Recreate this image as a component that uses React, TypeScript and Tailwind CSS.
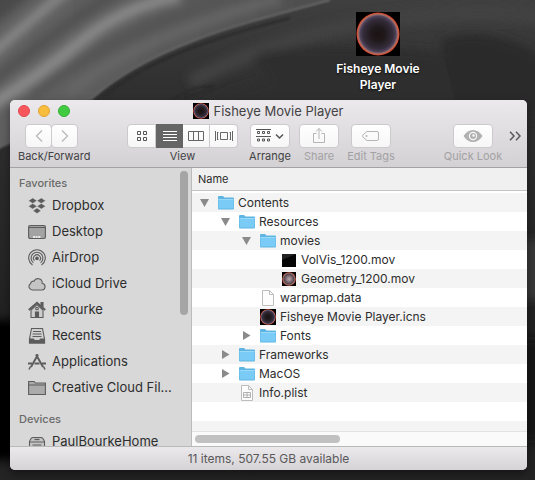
import type { ReactNode } from "react";

function OrbIcon({ id, className, light = false }: { id: string; className: string; light?: boolean }) {
  return (
    <svg viewBox="0 0 44 44" className={className} aria-hidden="true">
      <defs>
        <radialGradient id={id}>
          <stop offset="0" stopColor={light ? "#b9a7ab" : "#1b1213"} />
          <stop offset="0.35" stopColor={light ? "#8c7a82" : "#211a1d"} />
          <stop offset="0.7" stopColor={light ? "#58464f" : "#352d3b"} />
          <stop offset="0.84" stopColor={light ? "#8d6661" : "#51455f"} />
          <stop offset="0.9" stopColor="#946a6a" />
          <stop offset="0.94" stopColor="#c0654c" />
          <stop offset="1" stopColor="#dc3a26" />
        </radialGradient>
      </defs>
      <rect width="44" height="44" fill="#000" />
      <circle cx="22" cy="22" r="21.5" fill={`url(#${id})`} />
    </svg>
  );
}

function Wallpaper() {
  return (
    <svg
      className="absolute inset-0 h-full w-full"
      viewBox="0 0 535 480"
      preserveAspectRatio="none"
      aria-hidden="true"
    >
      <defs>
        <linearGradient id="desk" x1="0" y1="0" x2="0" y2="1">
          <stop offset="0" stopColor="#3f3f3f" />
          <stop offset="0.18" stopColor="#303030" />
          <stop offset="0.6" stopColor="#242424" />
          <stop offset="0.8" stopColor="#1c1c1c" />
          <stop offset="1" stopColor="#242424" />
        </linearGradient>
        <linearGradient id="sweep" x1="0" y1="0" x2="1" y2="0">
          <stop offset="0" stopColor="#646464" />
          <stop offset="0.6" stopColor="#575757" />
          <stop offset="1" stopColor="#484848" />
        </linearGradient>
        <filter id="soft" filterUnits="userSpaceOnUse" x="-60" y="-60" width="655" height="600">
          <feGaussianBlur stdDeviation="5" />
        </filter>
        <filter id="fine" filterUnits="userSpaceOnUse" x="-60" y="-60" width="655" height="600">
          <feGaussianBlur stdDeviation="1" />
        </filter>
      </defs>
      <rect width="535" height="480" fill="url(#desk)" />
      <g filter="url(#soft)" fill="none">
        <path d="M190 82Q290 30 400 18T560 22" stroke="#434343" strokeWidth="14" />
        <path d="M250 56Q300 40 420 50L580 70V120H180Q220 90 270 80" fill="#2e2e2e" />
        <path d="M195 78Q230 66 262 50" stroke="#424242" strokeWidth="6" />
        <path d="M440 40Q500 20 560 70V120H460Z" fill="#2b2b2b" />
      </g>
      <path
        d="M-60 -40H400L330 0C240 24 150 46 90 100L40 130Q14 142 -20 158Z"
        fill="url(#sweep)"
        filter="url(#fine)"
      />
      <g filter="url(#soft)" fill="none">
        <path d="M-20 20L30 -20" stroke="#484848" strokeWidth="26" />
        <path d="M-20 64Q40 12 80 -20" stroke="#8c8c8c" strokeWidth="9" />
        <path d="M-20 92Q60 26 120 -10" stroke="#505050" strokeWidth="9" />
        <path d="M-20 112Q36 78 80 42T180 -4" stroke="#8a8a8a" strokeWidth="12" />
        <path d="M30 96Q100 40 220 2" stroke="#545454" strokeWidth="12" />
        <path d="M70 92Q130 40 280 -2" stroke="#686868" strokeWidth="9" />
      </g>
      <g filter="url(#fine)" fill="none">
        <path d="M90 100C150 46 240 24 330 0" stroke="#737373" strokeWidth="1.500" />
        <path d="M104 96C150 58 220 36 290 18" stroke="#292929" strokeWidth="2" />
        <path d="M172 100Q190 87 212 86Q200 94 184 98" stroke="#282828" strokeWidth="1.500" />
      </g>
      <g filter="url(#soft)">
        <path d="M-30 320H20V460H-30Z" fill="#050505" />
        <path d="M520 240H560V300H520Z" fill="#393939" />
        <path d="M520 340H560V440H520Z" fill="#161616" />
      </g>
    </svg>
  );
}

function Tool({
  label,
  className,
  dim = false,
  children,
}: {
  label: string;
  className: string;
  dim?: boolean;
  children: ReactNode;
}) {
  return (
    <div role="group" aria-label={label} className={`flex shrink-0 flex-col items-center ${className}`}>
      <div className="flex h-6">{children}</div>
      <span
        className={`text-[11px] leading-4 whitespace-nowrap ${dim ? "text-[#a3a1a4]" : "text-[#434244]"}`}
      >
        {label}
      </span>
    </div>
  );
}

const buttonFace =
  "flex h-6 items-center justify-center border border-[#cccacd] bg-linear-to-b from-white to-[#f6f6f6] ";

function ViewIcon({ kind }: { kind: string }) {
  return (
    <svg width="20" height="12" viewBox="0 0 20 12" fill="none" stroke="currentColor" aria-hidden="true">
      {kind === "Icons" && (
        <path d="M5.5 1.5h3v3h-3zM11.500 1.5h3v3h-3zM5.5 7.500h3v3h-3zM11.500 7.500h3v3h-3z" />
      )}
      {kind === "List" && <path d="M3 1.5h14M3 4.500h14M3 7.500h14M3 10.500h14" />}
      {kind === "Columns" && <path d="M2.500 1.500h15v9h-15zM7.500 1.500v9M12.500 1.500v9" />}
      {kind === "Gallery" && (
        <path d="M6.500 2.500h7v7h-7zM1.500 1v10M3.500 2v8M18.500 1v10M16.500 2v8M3.500 2.500h1M3.500 9.500h1M15.500 2.500h1M15.500 9.500h1" />
      )}
    </svg>
  );
}

function Toolbar() {
  return (
    <div className="flex h-[45px] pt-[2px] pl-2 pr-[6px]">
      <div role="group" aria-label="Back/Forward" className="flex w-[74px] shrink-0 flex-col">
        <div className="ml-[7px] flex">
          <button aria-label="Back" className={buttonFace + "w-[27px] rounded-[4px] text-[#b9b9b9]"}>
            <svg width="8" height="14" viewBox="0 0 8 14" fill="none" stroke="currentColor" strokeWidth="1.300">
              <path d="M7 1.500L1.500 7L7 12.500" />
            </svg>
          </button>
          <button aria-label="Forward" className={buttonFace + "-ml-px w-[27px] rounded-[4px] text-[#b9b9b9]"}>
            <svg width="8" height="14" viewBox="0 0 8 14" fill="none" stroke="currentColor" strokeWidth="1.300">
              <path d="M1 1.500L6.500 7L1 12.500" />
            </svg>
          </button>
        </div>
        <span className="text-[11px] leading-4 whitespace-nowrap text-[#434244]">Back/Forward</span>
      </div>

      <Tool label="View" className="ml-[35px] w-[111px]">
        <button aria-label="Icons" className={buttonFace + "w-[29px] rounded-l-[4px] text-[#555]"}>
          <ViewIcon kind="Icons" />
        </button>
        <button
          aria-label="List"
          aria-pressed="true"
          className="flex h-6 w-[27px] items-center justify-center bg-[#666566] text-white"
        >
          <ViewIcon kind="List" />
        </button>
        <button aria-label="Columns" className={buttonFace + "w-[27px] border-l-0 text-[#666]"}>
          <ViewIcon kind="Columns" />
        </button>
        <button aria-label="Gallery" className={buttonFace + "w-[28px] rounded-r-[4px] border-l-0 text-[#666]"}>
          <ViewIcon kind="Gallery" />
        </button>
      </Tool>

      <Tool label="Arrange" className="ml-[11px] w-[42px]">
        <button aria-label="Arrange" className={buttonFace + "w-10 rounded-[4px] text-[#555]"}>
          <svg width="28" height="14" viewBox="0 0 28 14" fill="none" stroke="currentColor">
            <path d="M0 .5h15M0 7.500h15M1.500 2.500h2v2h-2zM6.500 2.500h2v2h-2zM11.500 2.500h2v2h-2zM1.500 10h2v2h-2zM6.500 10h2v2h-2zM11.500 10h2v2h-2z" />
            <path d="M20 5.500l3.500 3.500L27 5.500" strokeWidth="1.500" />
          </svg>
        </button>
      </Tool>

      <Tool label="Share" dim className="ml-2 w-10">
        <button aria-label="Share" className={buttonFace + "w-10 rounded-[4px] text-[#b5b5b5]"}>
          <svg width="14" height="18" viewBox="0 0 14 18" fill="none" stroke="currentColor">
            <path d="M4.500 6.500h-3v9h11v-9h-3M7 12V1.500M4 4.500l3-3l3 3" />
          </svg>
        </button>
      </Tool>

      <Tool label="Edit Tags" dim className="ml-2 w-12">
        <button aria-label="Edit Tags" className={buttonFace + "w-10 rounded-[4px] text-[#b5b5b5]"}>
          <svg width="18" height="12" viewBox="0 0 18 12" fill="none" stroke="currentColor">
            <path d="M5 1.500h10q1.500 0 1.500 1.500v6q0 1.500-1.500 1.500H5L1 7.200q-.8-1.200 0-2.400z" />
            <circle cx="4.500" cy="6" r="1" fill="currentColor" stroke="none" />
          </svg>
        </button>
      </Tool>

      <Tool label="Quick Look" dim className="ml-auto w-[58px]">
        <button aria-label="Quick Look" className={buttonFace + "w-10 rounded-[4px] text-[#b0b0b0]"}>
          <svg width="20" height="14" viewBox="0 0 20 14">
            <path d="M.5 7Q4.500 1 10 1T19.500 7Q15.500 13 10 13T.5 7z" fill="currentColor" />
            <circle cx="10" cy="7" r="4.200" fill="#f9f9f9" />
            <circle cx="10" cy="7" r="3" fill="currentColor" />
            <circle cx="10.500" cy="6.500" r="1.200" fill="#f9f9f9" />
          </svg>
        </button>
      </Tool>

      <button aria-label="More tools" className="ml-[7px] flex h-6 w-3 items-center text-[#59585a]">
        <svg width="12" height="10" viewBox="0 0 12 10" fill="none" stroke="currentColor" strokeWidth="1.500">
          <path d="M1 .8L5 5L1 9.200M7 .8L11 5L7 9.200" />
        </svg>
      </button>
    </div>
  );
}

const sidebarIcons: Record<string, ReactNode> = {
  Dropbox: (
    <path
      d="M4.700 1L9 3.700L4.700 6.400L.5 3.700zM13.300 1l4.200 2.700l-4.200 2.700L9 3.700zM4.700 6.600L9 9.300L4.700 12L.5 9.300zM13.300 6.600l4.200 2.700l-4.200 2.700L9 9.300zM9 11l4 2.700L9 16.500l-4-2.800z"
      fill="#5c5c5c"
      stroke="#d8d8d8"
      strokeWidth=".4"
    />
  ),
  Desktop: (
    <>
      <rect x=".6" y="2.500" width="16.800" height="13" rx="1.500" fill="#a3a3a3" />
      <path d="M1 4.500h16" />
      <path d="M5 14h8" stroke="#e8e8e8" strokeWidth="2" strokeDasharray="2 .6" />
    </>
  ),
  AirDrop: (
    <>
      <path d="M4.500 16A8.300 8.300 0 1 1 13.500 16" />
      <path d="M5.400 13.800A5.900 5.900 0 1 1 12.600 13.800" />
      <path d="M6.500 11.700A3.500 3.500 0 1 1 11.500 11.700" />
      <circle cx="9" cy="9.300" r="1.300" fill="#5c5c5c" />
      <path d="M9 11l-3 6h6z" fill="#d8d8d8" stroke="none" />
    </>
  ),
  "iCloud Drive": (
    <path
      d="M4 15A3.500 3.500 0 0 1 2.700 8.500A2.600 2.600 0 0 1 6 6.200A4.300 4.300 0 0 1 14.200 8.200A3.500 3.500 0 0 1 14.500 15z"
      fill="#c4c4c4"
    />
  ),
  pbourke: (
    <>
      <path d="M3 9v7.500h12V9L9 3.500z" fill="#cdcdcd" />
      <path d="M.8 9L9 1.800L17.200 9" strokeWidth="2" />
      <path d="M13 1.500h2v4l-2-1.500z" fill="#5c5c5c" />
      <path d="M7.500 11h3v5.500h-3z" fill="#5c5c5c" />
      <circle cx="9" cy="7.500" r="1.300" />
    </>
  ),
  Recents: (
    <>
      <path d="M3.500 1.500h11L16.500 12v4h-15v-4z" fill="#cfcfcf" />
      <path d="M1.500 12h4l1 1.500h5l1-1.500h4v4h-15z" fill="#5c5c5c" />
      <path d="M5 4.500h8M4.500 7h9M4.500 9.500h9" />
    </>
  ),
  Applications: (
    <>
      <path d="M10 1.500L3 14M8 1.500l7 12.500" strokeWidth="1.900" />
      <path d="M0 10.500h4M6.500 10.500h5M14 10.500h4" strokeWidth="1.800" />
      <path d="M2.500 13.500L1 16.500M15.500 13.500l1.500 3" strokeWidth="1.500" />
    </>
  ),
  "Creative Cloud Fil...": (
    <path d="M.6 15.500V2.500h5.500l1.200 1.500h10.100v11.500zM.6 6h16.800" fill="#ababab" />
  ),
  PaulBourkeHome: (
    <>
      <path d="M5 4.500h8q2 0 3.500 4V13q0 2-1.500 2H3q-1.500 0-1.500-2V8.500Q3 4.500 5 4.500z" fill="#c4c4c4" />
      <path d="M1.500 9h15M4.500 12h9" />
      <path d="M6.500 6.500h5" strokeWidth="1.300" />
    </>
  ),
};

function SidebarItem({ name }: { name: string }) {
  return (
    <li>
      <a href="#" className="flex h-[26px] items-center gap-[6px] pl-[18px] text-[13px] text-[#2d2d2d]">
        <svg
          width="18"
          height="18"
          viewBox="0 0 18 18"
          fill="none"
          stroke="#5c5c5c"
          strokeWidth="1.100"
          className="shrink-0"
          aria-hidden="true"
        >
          {sidebarIcons[name]}
        </svg>
        <span className="whitespace-nowrap">{name}</span>
      </a>
    </li>
  );
}

const favorites = [
  "Dropbox",
  "Desktop",
  "AirDrop",
  "iCloud Drive",
  "pbourke",
  "Recents",
  "Applications",
  "Creative Cloud Fil...",
];

function Sidebar() {
  return (
    <nav className="relative w-[182px] shrink-0 overflow-hidden border-r border-[#bcbcbc] bg-[#d8d8d8] pt-[6px]">
      <h2 className="pl-[9px] text-[11px] leading-[19px] font-medium text-[#6a6a6a]">Favorites</h2>
      <ul>
        {favorites.map((name) => (
          <SidebarItem key={name} name={name} />
        ))}
      </ul>
      <h2 className="mt-[9px] pl-[9px] text-[11px] leading-[19px] font-medium text-[#6a6a6a]">Devices</h2>
      <ul>
        <SidebarItem name="PaulBourkeHome" />
      </ul>
      <div className="absolute top-[3px] right-[3px] h-36 w-2 rounded-full bg-[#a5a5a5]" />
    </nav>
  );
}

type Entry = { name: string; depth: number; kind: string; open?: boolean };

const entries: Entry[] = [
  { name: "Contents", depth: 0, kind: "folder", open: true },
  { name: "Resources", depth: 1, kind: "folder", open: true },
  { name: "movies", depth: 2, kind: "folder", open: true },
  { name: "VolVis_1200.mov", depth: 3, kind: "dark" },
  { name: "Geometry_1200.mov", depth: 3, kind: "geometry" },
  { name: "warpmap.data", depth: 2, kind: "file" },
  { name: "Fisheye Movie Player.icns", depth: 2, kind: "orb" },
  { name: "Fonts", depth: 2, kind: "folder", open: false },
  { name: "Frameworks", depth: 1, kind: "folder", open: false },
  { name: "MacOS", depth: 1, kind: "folder", open: false },
  { name: "Info.plist", depth: 1, kind: "plist" },
];

const indents = ["pl-2", "pl-[29px]", "pl-[50px]", "pl-[71px]"];

function EntryIcon({ kind }: { kind: string }) {
  if (kind === "orb") return <OrbIcon id="orb-row" className="size-4 shrink-0" />;
  if (kind === "geometry")
    return (
      <span className="flex size-4 shrink-0 items-center justify-center">
        <OrbIcon id="orb-geometry" light className="size-[14px]" />
      </span>
    );
  return (
    <svg width="16" height="16" viewBox="0 0 16 16" className="shrink-0" aria-hidden="true">
      {kind === "folder" && (
        <>
          <path d="M0 2Q0 1 1 1h4l1.500 1.500H15q1 0 1 1v10q0 1-1 1H1q-1 0-1-1z" fill="#5eb5e2" />
          <path d="M.5 4.500h15v9H.5z" fill="#7acbf6" />
          <path d="M.5 4.500h15" stroke="#9adaf8" />
        </>
      )}
      {kind === "dark" && (
        <>
          <rect x="1" y="2" width="14" height="13" fill="#050505" />
          <path d="M1 2h14L1 8z" fill="#222" />
        </>
      )}
      {(kind === "file" || kind === "plist") && (
        <path d="M2.500.5h7l4 4v11h-11zM9.500.5v4h4" fill="#fdfdfd" stroke="#bdbdbd" />
      )}
      {kind === "plist" && (
        <path d="M4.500 7.500h7v5h-7zM4.500 10h7M8 7.500v5" fill="none" stroke="#b0b0b0" />
      )}
    </svg>
  );
}

function FileList() {
  return (
    <div className="flex min-w-0 flex-1 flex-col">
      <div className="min-h-0 flex-1 overflow-hidden bg-white">
        <table className="w-full border-collapse text-left">
          <thead>
            <tr>
              <th scope="col" className="p-0 pb-[2px] font-normal">
                <div className="h-[23px] border-b border-[#c4c4c4] bg-[#f0f0f0] pl-[6px] text-[11px] leading-[22px] text-[#2d2d2d]">
                  Name
                </div>
              </th>
            </tr>
          </thead>
          <tbody>
            {entries.map((entry) => (
              <tr key={entry.name} className="odd:bg-[#f4f4f4]">
                <td className="p-0">
                  <div className={`flex h-[19px] items-center text-xs text-[#2d2d2d] ${indents[entry.depth]}`}>
                    <span className="flex w-[18px] shrink-0">
                      {entry.open !== undefined && (
                        <button aria-label={entry.name} aria-expanded={entry.open}>
                          <svg width="9" height="9" viewBox="0 0 9 9" fill="#8a8a8a">
                            <path d={entry.open ? "M0 1h9L4.500 9z" : "M1 0v9l7.500-4.500z"} />
                          </svg>
                        </button>
                      )}
                    </span>
                    <EntryIcon kind={entry.kind} />
                    <span className="ml-1 whitespace-nowrap">{entry.name}</span>
                  </div>
                </td>
              </tr>
            ))}
            <tr>
              <td className="h-[19px] p-0" />
            </tr>
            <tr className="bg-[#f4f4f4]">
              <td className="h-[19px] p-0" />
            </tr>
          </tbody>
        </table>
      </div>
      <div className="h-[15px] shrink-0 border-t border-[#e3e3e3] bg-[#fafafa] pt-[3px] pl-[3px]">
        <div className="h-2 w-[145px] rounded-full bg-[#c1c1c1]" />
      </div>
    </div>
  );
}

export default function App() {
  return (
    <main className="relative isolate flex h-screen min-h-[480px] flex-col overflow-hidden bg-[#2a2a2a] pt-3 pr-2 pb-[10px] pl-[10px] font-['Inter','Liberation_Sans',sans-serif]">
      <div className="absolute inset-0 -z-10">
        <Wallpaper />
      </div>

      <div className="flex h-[88px] shrink-0 justify-end pr-[102px]">
        <button className="flex w-[94px] flex-col items-center">
          <OrbIcon id="orb-desktop" className="size-11" />
          <span className="mt-[5px] text-xs leading-4 font-semibold text-white text-shadow-[0_1px_2px_rgb(0_0_0/0.8)]">
            Fisheye Movie Player
          </span>
        </button>
      </div>

      <section
        aria-label="Fisheye Movie Player"
        className="flex min-h-0 flex-1 flex-col overflow-hidden rounded-[5px] bg-[#d8d8d8] shadow-[0_4px_10px_rgb(0_0_0/0.4)]"
      >
        <header className="shrink-0 border-b border-[#a4a2a5] bg-linear-to-b from-[#ebe9ec] to-[#d3d1d4]">
          <div className="relative flex h-[22px] items-center justify-center gap-1">
            <div className="absolute left-2 flex gap-2">
              <button aria-label="Close" className="size-3 rounded-full border border-[#e2484f] bg-[#f6565c]" />
              <button aria-label="Minimize" className="size-3 rounded-full border border-[#e0a334] bg-[#f8bd3d]" />
              <button aria-label="Zoom" className="size-3 rounded-full border border-[#32b135] bg-[#42ca41]" />
            </div>
            <OrbIcon id="orb-title" className="size-4" />
            <h1 className="text-[13px] leading-[22px] text-[#434244]">Fisheye Movie Player</h1>
          </div>
          <Toolbar />
        </header>

        <div className="flex min-h-0 flex-1">
          <Sidebar />
          <FileList />
        </div>

        <footer className="h-6 shrink-0 border-t border-[#bab8bb] bg-linear-to-b from-[#ebe9ec] to-[#d5d3d6] text-center text-xs leading-[23px] text-[#59585a]">
          11 items, 507.55 GB available
        </footer>
      </section>
    </main>
  );
}
